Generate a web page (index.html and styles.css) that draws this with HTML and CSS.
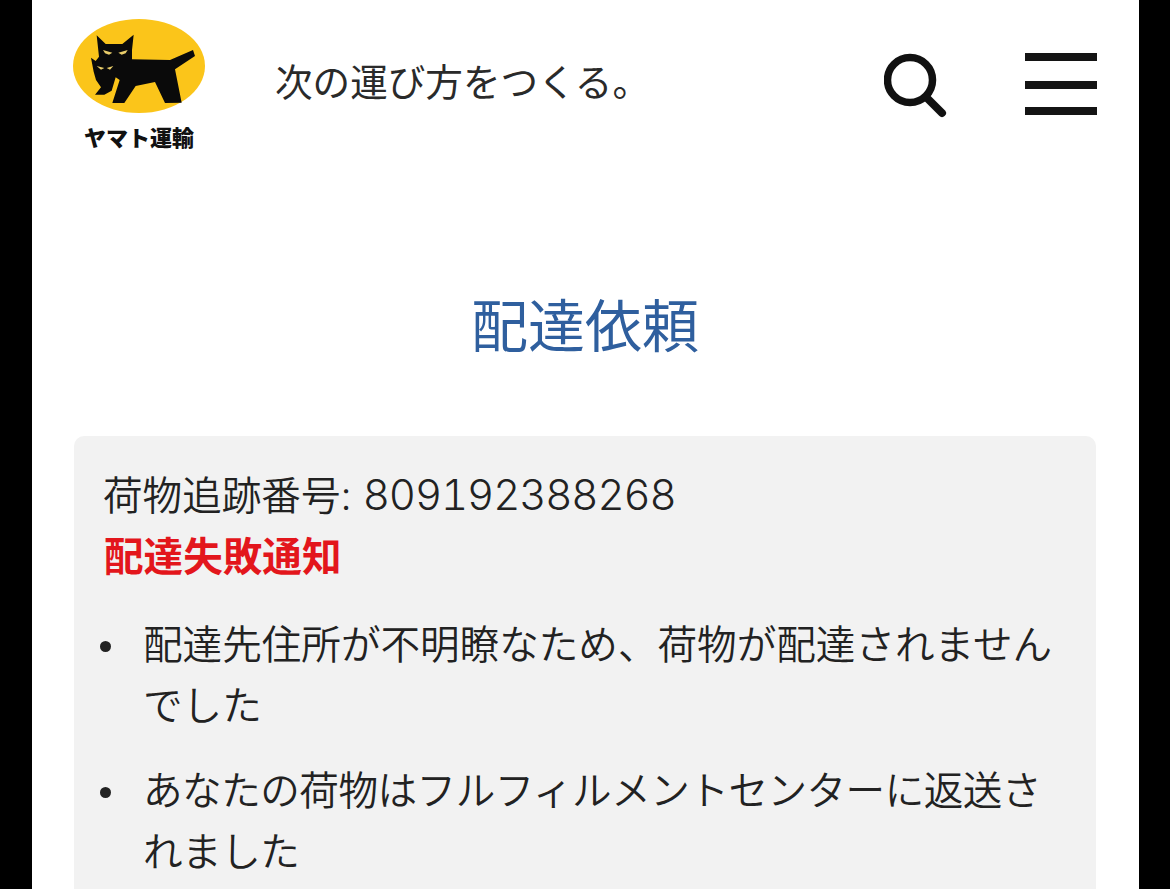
FILE: index.html
```html
<!DOCTYPE html>
<html lang="ja">
<head>
    <meta charset="UTF-8">
    <meta name="viewport" content="width=device-width, initial-scale=1.0">
    <title>配達依頼</title>
    <link rel="stylesheet" href="styles.css">
</head>
<body>
    <div class="page">
        <header class="site-header">
            <a class="logo">
                <svg class="logo-mark" viewBox="-36 -33 396 282" width="132" height="94">
                    <ellipse cx="162" cy="108" rx="198" ry="141" fill="#fbc51a"/>
                    <path fill="#0a0a0a" d="M35 16 L62 42 L112 42 L146 14 L141 60 L141 88 L255 90 L324 60 L330 78 L270 118 L290 218 L240 219 L210 156 L152 168 L118 219 L82 219 L104 150 L92 142 L80 182 L58 194 L30 194 L48 172 L33 150 L26 125 L18 83 L32 93 L42 80 Z"/>
                    <path fill="#e9cd6a" d="M54 60 L82 68 L72 74 L60 70 Z M128 60 L100 68 L110 74 L122 70 Z M35 108 L58 114 L48 119 Z M85 108 L65 114 L75 119 Z"/>
                </svg>
                <span class="logo-name">ヤマト運輸</span>
            </a>
            <p class="tagline">次の運び方をつくる。</p>
            <div class="header-icons">
                <svg class="icon-search" viewBox="0 0 64 66" width="64" height="66">
                    <circle cx="26" cy="27" r="22.5" fill="none" stroke="#111" stroke-width="7.5"/>
                    <path d="M42 44 L58 60" stroke="#111" stroke-width="8" stroke-linecap="round"/>
                </svg>
                <div class="menu-icon">
                    <span></span>
                    <span></span>
                    <span></span>
                </div>
            </div>
        </header>

        <h1 class="page-title">配達依頼</h1>

        <section class="notice">
            <p class="tracking">荷物追跡番号: <span class="tracking-number">809192388268</span></p>
            <p class="notice-title">配達失敗通知</p>
            <ul class="notice-list">
                <li><span>配達先住所が不明瞭なため、荷物が配達されませんでした</span></li>
                <li><span>あなたの荷物はフルフィルメントセンターに返送されました</span></li>
            </ul>
        </section>
    </div>
</body>
</html>
```

FILE: styles.css
```css
* {
    margin: 0;
    padding: 0;
    box-sizing: border-box;
}

html, body {
    height: 100%;
    overflow: hidden;
}

body {
    background: #000;
    font-family: Inter, "Noto Sans CJK JP", sans-serif;
    color: #222;
}

.page {
    width: 1107px;
    height: 889px;
    margin-left: 32px;
    background: #fff;
    padding: 19px 42px 0 41px;
    overflow: hidden;
}

.site-header {
    display: flex;
    align-items: flex-start;
}

.logo {
    display: flex;
    flex-direction: column;
    align-items: center;
    width: 132px;
}

.logo-mark {
    display: block;
}

.logo-name {
    font-family: "Noto Sans CJK JP", sans-serif;
    font-size: 22px;
    font-weight: 900;
    line-height: 30px;
    margin-top: 8px;
    color: #111;
    white-space: nowrap;
}

.tagline {
    font-family: "Noto Sans CJK JP", sans-serif;
    font-size: 37.6px;
    font-weight: 400;
    line-height: 50px;
    margin: 36px 0 0 70px;
    color: #2a2a2a;
    white-space: nowrap;
}

.header-icons {
    display: flex;
    align-items: flex-start;
    gap: 77px;
    margin-left: auto;
    padding-top: 34px;
}

.icon-search {
    display: block;
}

.menu-icon {
    display: flex;
    flex-direction: column;
    width: 72px;
}

.menu-icon span {
    display: block;
    height: 8px;
    background: #141414;
    margin-bottom: 20px;
}

.menu-icon span:nth-child(2) {
    margin-bottom: 18px;
}

.page-title {
    margin-top: 136px;
    font-family: "Noto Sans CJK JP", sans-serif;
    font-size: 57px;
    font-weight: 400;
    line-height: 70px;
    text-align: center;
    color: #2f5f9e;
}

.notice {
    margin: 79px 1px 0;
    background: #f2f2f2;
    border-radius: 10px;
    padding: 31px 29px 40px 30px;
    font-size: 39.6px;
    font-weight: 350;
    line-height: 61px;
}

.tracking {
    margin-left: -1px;
    line-height: 56px;
}

.tracking-number {
    font-size: 42px;
    font-weight: 300;
    font-variant-numeric: tabular-nums;
    letter-spacing: -1.1px;
}

.notice-title {
    font-family: "Noto Sans CJK JP", sans-serif;
    font-weight: 700;
    line-height: 60px;
    color: #e3161c;
}

.notice-list {
    list-style: none;
    margin-top: 31px;
}

.notice-list li {
    display: flex;
    margin-bottom: 24px;
}

.notice-list li::before {
    content: "";
    flex-shrink: 0;
    width: 11px;
    height: 11px;
    margin: 26px 32px 0 -4px;
    border-radius: 50%;
    background: #222;
}

.notice-list li + li {
    letter-spacing: -0.5px;
}
```
